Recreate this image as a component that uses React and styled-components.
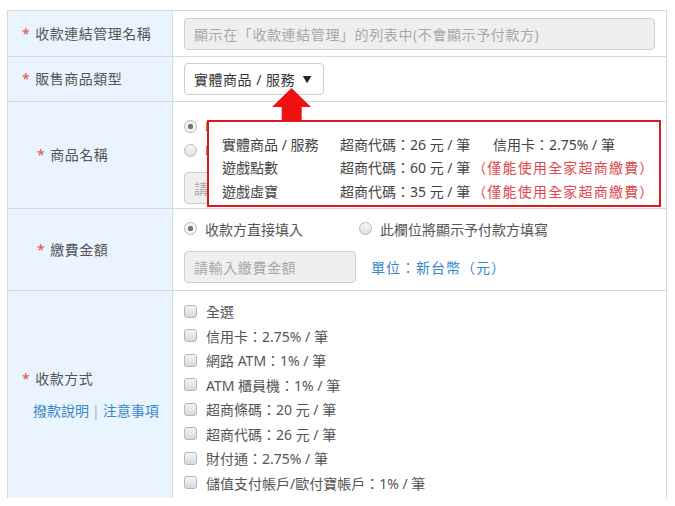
import styled, { createGlobalStyle } from 'styled-components'

const GlobalStyle = createGlobalStyle`
  body{
    margin:0;
    background:#fff;
    font-family:"Noto Sans","Noto Sans CJK TC",sans-serif;
    font-size:14px;
    color:#555;
  }
`

const Page = styled.div`
  padding:10px 8px 0 7px;
`

const Wrap = styled.div`
  position:relative;
  width:660px;
`

const Table = styled.div`
  display:grid;
  grid-template-columns:165px 1fr;
  border-top:1px solid #d9d9d9;
  border-left:1px solid #d9d9d9;
  border-right:1px solid #d9d9d9;
`

const LabelCell = styled.div`
  background:#eaf4fe;
  border-right:1px solid #d3dbe3;
  border-bottom:${p => (p.$last ? 'none' : '1px solid #d9d9d9')};
  height:${p => p.$h}px;
  box-sizing:border-box;
  display:flex;
  flex-direction:column;
  justify-content:center;
  padding-left:${p => p.$pad || 14}px;
  gap:12px;
`

const Label = styled.div`
  line-height:20px;
  letter-spacing:0.5px;
  &::before{
    content:'*';
    color:#d9534f;
    margin-right:5px;
  }
`

const Links = styled.div`
  color:#3a87c8;
  padding-left:11px;
  line-height:20px;
  span{ color:#aaa; margin:0 3px; }
`

const FieldCell = styled.div`
  border-bottom:${p => (p.$last ? 'none' : '1px solid #d9d9d9')};
  height:${p => p.$h}px;
  box-sizing:border-box;
  padding:${p => p.$pad || '0 11px'};
  display:flex;
  flex-direction:column;
  justify-content:${p => p.$top ? 'flex-start' : 'center'};
  gap:${p => p.$gap || 0}px;
`

const TextBox = styled.div`
  box-sizing:border-box;
  height:32px;
  width:${p => p.$w || '100%'};
  background:#efefef;
  border:1px solid #cfcfcf;
  border-radius:4px;
  color:#a8a8a8;
  padding:0 9px;
  display:flex;
  align-items:center;
  white-space:nowrap;
  overflow:hidden;
  letter-spacing:0.6px;
`

const Select = styled.div`
  box-sizing:border-box;
  height:32px;
  width:140px;
  background:#fff;
  border:1px solid #cfcfcf;
  border-radius:4px;
  color:#333;
  padding:0 9px;
  display:flex;
  align-items:center;
  justify-content:space-between;
  letter-spacing:0.5px;
  small{ font-size:9px; color:#222; margin-right:2px; }
`

const RadioRow = styled.div`
  display:flex;
  align-items:center;
  gap:${p => p.$gap || 0}px;
  height:24px;
`

const Radio = styled.label`
  display:flex;
  align-items:center;
  gap:8px;
  width:${p => p.$w || 'auto'};
  white-space:nowrap;
  &::before{
    content:'';
    width:11px;
    height:11px;
    border-radius:50%;
    border:1px solid #b7b7b7;
    background:${p => p.$on
      ? 'radial-gradient(circle, #777 0 2.5px, #f4f4f4 3px)'
      : 'linear-gradient(#fafafa,#dedede)'};
  }
`

const Unit = styled.span`
  color:#3a87c8;
  white-space:nowrap;
  letter-spacing:1px;
`

const CheckList = styled.div`
  display:flex;
  flex-direction:column;
`

const Check = styled.label`
  display:flex;
  align-items:center;
  gap:9px;
  height:24.5px;
  white-space:nowrap;
  &::before{
    content:'';
    width:11px;
    height:11px;
    border-radius:3px;
    border:1px solid #b5b5b5;
    background:linear-gradient(#f5f5f5,#d9d9d9);
  }
`

const Callout = styled.div`
  position:absolute;
  left:200px;
  top:110px;
  width:454px;
  height:87px;
  box-sizing:border-box;
  background:#fff;
  border:2px solid #e3161d;
  padding:13px 0 0 13px;
  display:grid;
  grid-template-columns:118px auto;
  line-height:19.5px;
  color:#444;
`

const Fee = styled.div`
  white-space:nowrap;
  b{ font-weight:normal; display:inline-block; width:153px; }
  em{ font-style:normal; color:#e0484c; letter-spacing:1.2px; margin-left:2px; }
`

const Arrow = styled.svg`
  position:absolute;
  left:263px;
  top:76px;
`

const methods = [
  '全選',
  '信用卡：2.75% / 筆',
  '網路 ATM：1% / 筆',
  'ATM 櫃員機：1% / 筆',
  '超商條碼：20 元 / 筆',
  '超商代碼：26 元 / 筆',
  '財付通：2.75% / 筆',
  '儲值支付帳戶/歐付寶帳戶：1% / 筆',
]

export default function App() {
  return (
    <Page>
      <GlobalStyle />
      <Wrap>
        <Table>
          <LabelCell $h={46}><Label>收款連結管理名稱</Label></LabelCell>
          <FieldCell $h={46}>
            <TextBox>顯示在「收款連結管理」的列表中(不會顯示予付款方)</TextBox>
          </FieldCell>

          <LabelCell $h={45}><Label>販售商品類型</Label></LabelCell>
          <FieldCell $h={45}>
            <Select>實體商品 / 服務<small>▼</small></Select>
          </FieldCell>

          <LabelCell $h={107} $pad={29}><Label>商品名稱</Label></LabelCell>
          <FieldCell $h={107} $top $pad="12px 11px 0" $gap={0}>
            <RadioRow>
              <Radio $on $w="175px">收款方直接填入</Radio>
              <Radio>此欄位將顯示予付款方填寫</Radio>
            </RadioRow>
            <RadioRow>
              <Radio>收款方提供選項</Radio>
            </RadioRow>
            <TextBox $w="172px" style={{ marginTop: 10 }}>請輸入商品名稱</TextBox>
          </FieldCell>

          <LabelCell $h={82} $pad={29}><Label>繳費金額</Label></LabelCell>
          <FieldCell $h={82} $gap={10}>
            <RadioRow>
              <Radio $on $w="175px">收款方直接填入</Radio>
              <Radio>此欄位將顯示予付款方填寫</Radio>
            </RadioRow>
            <RadioRow $gap={15} style={{ height: 32 }}>
              <TextBox $w="172px">請輸入繳費金額</TextBox>
              <Unit>單位：新台幣（元）</Unit>
            </RadioRow>
          </FieldCell>

          <LabelCell $h={207} $last>
            <Label>收款方式</Label>
            <Links>撥款說明<span>|</span>注意事項</Links>
          </LabelCell>
          <FieldCell $h={207} $last $top $pad="8px 11px 0">
            <CheckList>
              {methods.map(m => <Check key={m}>{m}</Check>)}
            </CheckList>
          </FieldCell>
        </Table>

        <Arrow width="42" height="36" viewBox="0 0 42 36">
          <polygon points="21.5,2 41,21 31.7,21 31.7,36 11.7,36 11.7,21 2,21" fill="#f01010" />
        </Arrow>

        <Callout>
          <div>實體商品 / 服務</div>
          <Fee><b>超商代碼：26 元 / 筆</b>信用卡：2.75% / 筆</Fee>
          <div>遊戲點數</div>
          <Fee>超商代碼：60 元 / 筆<em>（僅能使用全家超商繳費）</em></Fee>
          <div>遊戲虛寶</div>
          <Fee>超商代碼：35 元 / 筆<em>（僅能使用全家超商繳費）</em></Fee>
        </Callout>
      </Wrap>
    </Page>
  )
}
